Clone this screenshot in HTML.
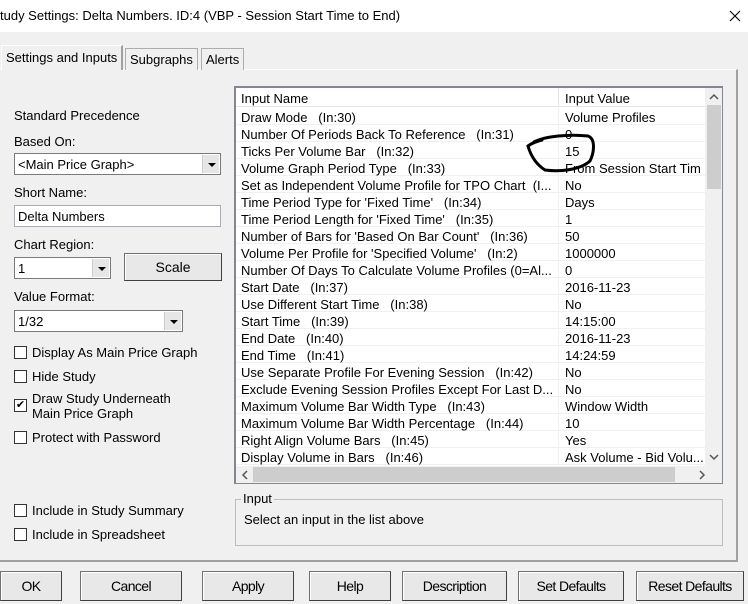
<!DOCTYPE html>
<html><head><style>
*{box-sizing:border-box;margin:0;padding:0}
body{width:748px;height:604px;background:#f0f0f0;font-family:"Liberation Sans",Arial,sans-serif;font-size:13px;color:#000;position:relative;overflow:hidden}
.a{position:absolute;white-space:nowrap}
.title{left:0;top:0;width:748px;height:32px;background:#fff}
.tab{position:absolute;border:1px solid #adadad;border-bottom:none;background:#f0f0f0;padding:2px 4px 0 4px;height:22px;font-size:13px}
.panel{left:0;top:69px;width:738px;height:493px;border-top:1px solid #fff;border-right:2px solid #a0a0a0;border-bottom:2px solid #a0a0a0}
.combo{position:absolute;background:#fff;border:1px solid #7a7a7a;height:22px;padding:3px 0 0 3px}
.combo .dd{position:absolute;right:1px;top:1px;width:17px;height:18px;background:#e6e6e6;border-left:1px solid #ccc}
.combo .dd:after{content:"";position:absolute;left:5px;top:8px;border-left:4px solid transparent;border-right:4px solid transparent;border-top:4px solid #000}
.edit{position:absolute;background:#fff;border:1px solid #abadb3;height:22px;padding:3px 0 0 3px}
.cb{position:absolute;width:13px;height:13px;border:1px solid #333;background:#fff}
.btn{position:absolute;top:571px;height:30px;border:1px solid #707070;border-right-color:#404040;border-bottom-color:#404040;background:#e8e8e8;text-align:center;line-height:28px;font-size:14px;letter-spacing:-0.6px;box-shadow:inset 1px 1px #fff}
.list{left:234px;top:86px;width:489px;height:398px;border:1px solid #828790;border-top:2px solid #828790;border-left:2px solid #828790;background:#fff;overflow:hidden}
.row{position:absolute;left:0;height:17px;width:470px;border-bottom:1px solid #f0f0f0;font-size:13px;line-height:17px}
.row span{position:absolute;top:1px}
</style></head><body>
<div class="a title"></div>
<div class="a" style="left:0;top:8px;font-size:13px">tudy Settings: Delta Numbers. ID:4 (VBP - Session Start Time to End)</div>
<svg class="a" style="left:729px;top:10px" width="12" height="12"><path d="M1 1L11 11M11 1L1 11" stroke="#000" stroke-width="1.1"/></svg>

<div class="a panel"></div>
<div class="tab" style="left:1px;top:45px;height:25px;background:#f0f0f0;border-color:#fff;border-right:2px solid #a0a0a0;padding-top:4px">Settings and Inputs</div>
<div class="tab" style="left:125px;top:48px;padding-top:3px">Subgraphs</div>
<div class="tab" style="left:201px;top:48px;padding-top:3px">Alerts</div>

<div class="a" style="left:14px;top:108px">Standard Precedence</div>
<div class="a" style="left:14px;top:134px">Based On:</div>
<div class="combo" style="left:14px;top:153px;width:207px">&lt;Main Price Graph&gt;<div class="dd"></div></div>
<div class="a" style="left:14px;top:185px">Short Name:</div>
<div class="edit" style="left:14px;top:205px;width:207px">Delta Numbers</div>
<div class="a" style="left:14px;top:237px">Chart Region:</div>
<div class="combo" style="left:14px;top:257px;width:97px">1<div class="dd"></div></div>
<div class="btn" style="left:124px;top:253px;width:98px;height:28px;line-height:26px;font-size:14px;letter-spacing:0">Scale</div>
<div class="a" style="left:14px;top:289px">Value Format:</div>
<div class="combo" style="left:14px;top:310px;width:169px">1/32<div class="dd"></div></div>

<div class="cb" style="left:14px;top:346px"></div><div class="a" style="left:32px;top:345px">Display As Main Price Graph</div>
<div class="cb" style="left:14px;top:370px"></div><div class="a" style="left:32px;top:369px">Hide Study</div>
<div class="cb" style="left:14px;top:399px;font-size:11px;line-height:10px;text-align:center">✔</div><div class="a" style="left:32px;top:391px;line-height:15px">Draw Study Underneath<br>Main Price Graph</div>
<div class="cb" style="left:14px;top:431px"></div><div class="a" style="left:32px;top:430px">Protect with Password</div>
<div class="cb" style="left:14px;top:504px"></div><div class="a" style="left:32px;top:503px">Include in Study Summary</div>
<div class="cb" style="left:14px;top:528px"></div><div class="a" style="left:32px;top:527px">Include in Spreadsheet</div>

<div class="a list">
<div class="a" style="left:0;top:0;width:470px;height:19px;background:#fff;border-bottom:1px solid #e5e5e5"></div>
<div class="a" style="left:322px;top:0;width:1px;height:19px;background:#e5e5e5"></div>
<div class="a" style="left:5px;top:3px">Input Name</div>
<div class="a" style="left:329px;top:3px">Input Value</div>
<div style="position:absolute;left:0;top:20px">
<div class="row" style="top:0"><span style="left:5px">Draw Mode &nbsp;&nbsp;(In:30)</span><span style="left:329px">Volume Profiles</span></div>
<div class="row" style="top:17px"><span style="left:5px">Number Of Periods Back To Reference &nbsp;&nbsp;(In:31)</span><span style="left:329px">0</span></div>
<div class="row" style="top:34px"><span style="left:5px">Ticks Per Volume Bar &nbsp;&nbsp;(In:32)</span><span style="left:329px">15</span></div>
<div class="row" style="top:51px"><span style="left:5px">Volume Graph Period Type &nbsp;&nbsp;(In:33)</span><span style="left:329px">From Session Start Tim</span></div>
<div class="row" style="top:68px"><span style="left:5px">Set as Independent Volume Profile for TPO Chart &nbsp;(I...</span><span style="left:329px">No</span></div>
<div class="row" style="top:85px"><span style="left:5px">Time Period Type for 'Fixed Time' &nbsp;&nbsp;(In:34)</span><span style="left:329px">Days</span></div>
<div class="row" style="top:102px"><span style="left:5px">Time Period Length for 'Fixed Time' &nbsp;&nbsp;(In:35)</span><span style="left:329px">1</span></div>
<div class="row" style="top:119px"><span style="left:5px">Number of Bars for 'Based On Bar Count' &nbsp;&nbsp;(In:36)</span><span style="left:329px">50</span></div>
<div class="row" style="top:136px"><span style="left:5px">Volume Per Profile for 'Specified Volume' &nbsp;&nbsp;(In:2)</span><span style="left:329px">1000000</span></div>
<div class="row" style="top:153px"><span style="left:5px">Number Of Days To Calculate Volume Profiles (0=Al...</span><span style="left:329px">0</span></div>
<div class="row" style="top:170px"><span style="left:5px">Start Date &nbsp;&nbsp;(In:37)</span><span style="left:329px">2016-11-23</span></div>
<div class="row" style="top:187px"><span style="left:5px">Use Different Start Time &nbsp;&nbsp;(In:38)</span><span style="left:329px">No</span></div>
<div class="row" style="top:204px"><span style="left:5px">Start Time &nbsp;&nbsp;(In:39)</span><span style="left:329px">14:15:00</span></div>
<div class="row" style="top:221px"><span style="left:5px">End Date &nbsp;&nbsp;(In:40)</span><span style="left:329px">2016-11-23</span></div>
<div class="row" style="top:238px"><span style="left:5px">End Time &nbsp;&nbsp;(In:41)</span><span style="left:329px">14:24:59</span></div>
<div class="row" style="top:255px"><span style="left:5px">Use Separate Profile For Evening Session &nbsp;&nbsp;(In:42)</span><span style="left:329px">No</span></div>
<div class="row" style="top:272px"><span style="left:5px">Exclude Evening Session Profiles Except For Last D...</span><span style="left:329px">No</span></div>
<div class="row" style="top:289px"><span style="left:5px">Maximum Volume Bar Width Type &nbsp;&nbsp;(In:43)</span><span style="left:329px">Window Width</span></div>
<div class="row" style="top:306px"><span style="left:5px">Maximum Volume Bar Width Percentage &nbsp;&nbsp;(In:44)</span><span style="left:329px">10</span></div>
<div class="row" style="top:323px"><span style="left:5px">Right Align Volume Bars &nbsp;&nbsp;(In:45)</span><span style="left:329px">Yes</span></div>
<div class="row" style="top:340px"><span style="left:5px">Display Volume in Bars &nbsp;&nbsp;(In:46)</span><span style="left:329px">Ask Volume - Bid Volu...</span></div>
</div>
<div class="a" style="left:322px;top:20px;width:1px;height:357px;background:#f0f0f0"></div>
<div class="a" style="left:469px;top:0;width:17px;height:378px;background:#f0f0f0"></div>
<div class="a" style="left:471px;top:17px;width:14px;height:84px;background:#cdcdcd"></div>
<svg class="a" style="left:473px;top:5px" width="10" height="8"><path d="M1 6L5 2L9 6" fill="none" stroke="#555" stroke-width="1.5"/></svg>
<svg class="a" style="left:473px;top:365px" width="10" height="8"><path d="M1 2L5 6L9 2" fill="none" stroke="#555" stroke-width="1.5"/></svg>
<div class="a" style="left:0;top:378px;width:486px;height:17px;background:#f0f0f0"></div>
<div class="a" style="left:17px;top:379px;width:422px;height:15px;background:#cdcdcd"></div>
<svg class="a" style="left:5px;top:382px" width="8" height="10"><path d="M6 1L2 5L6 9" fill="none" stroke="#555" stroke-width="1.5"/></svg>
<svg class="a" style="left:462px;top:382px" width="8" height="10"><path d="M2 1L6 5L2 9" fill="none" stroke="#555" stroke-width="1.5"/></svg>
</div>

<svg class="a" style="left:520px;top:128px" width="80" height="50"><path d="M14 14 C25 8 50 6 68 8 C76 11 74 25 70 33 C60 42 40 44 25 42 C14 35 10 25 8 18 C12 15 18 13 22 12" fill="none" stroke="#000" stroke-width="3" stroke-linecap="round"/></svg>

<div class="a" style="left:235px;top:499px;width:488px;height:47px;border:1px solid #bdbdbd"></div>
<div class="a" style="left:241px;top:491px;background:#f0f0f0;padding:0 2px">Input</div>
<div class="a" style="left:244px;top:512px">Select an input in the list above</div>

<div class="btn" style="left:0;width:62px">OK</div>
<div class="btn" style="left:80px;width:102px">Cancel</div>
<div class="btn" style="left:202px;width:92px">Apply</div>
<div class="btn" style="left:309px;width:82px">Help</div>
<div class="btn" style="left:402px;width:105px">Description</div>
<div class="btn" style="left:518px;width:106px">Set Defaults</div>
<div class="btn" style="left:636px;width:108px">Reset Defaults</div>
</body></html>
